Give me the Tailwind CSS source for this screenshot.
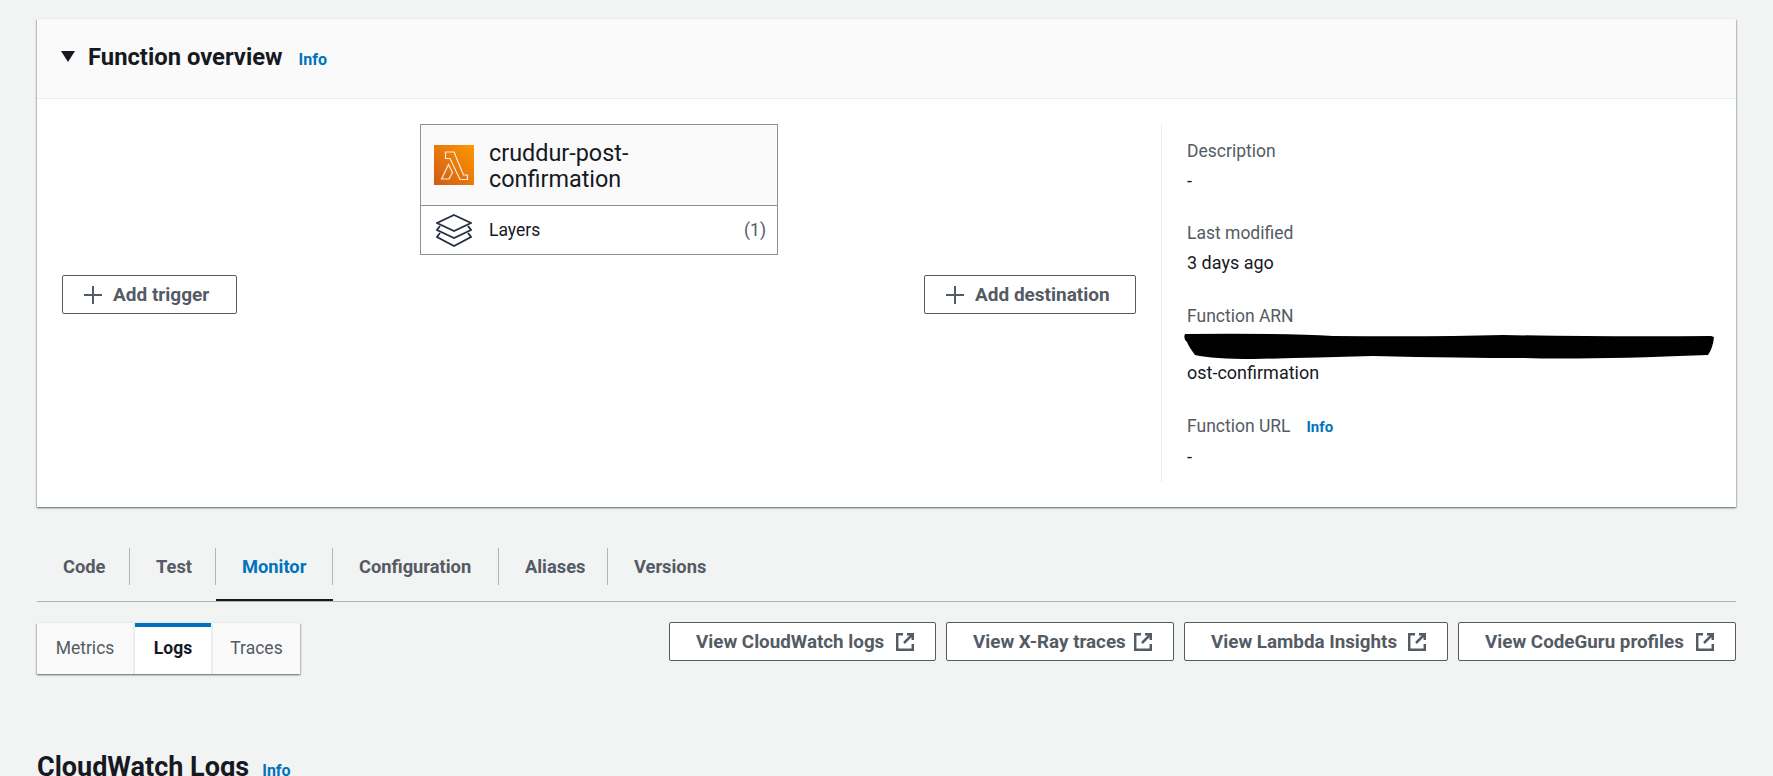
<!DOCTYPE html>
<html lang="en">
<head>
    <meta charset="UTF-8">
    <title>Function overview</title>
    <script src="https://cdn.jsdelivr.net/npm/@tailwindcss/browser@4"></script>
</head>
<body class="bg-[#f2f3f3] text-[#16191f] font-['Roboto',sans-serif] text-[17.5px] h-[776px] overflow-hidden">
<div class="pl-[37px] pr-[37px] pt-[19px]">

    <!-- Function overview card -->
    <section class="bg-white shadow-[0_1px_2px_0_rgba(0,28,36,0.5),1px_1px_1px_0_rgba(0,28,36,0.1),-1px_1px_1px_0_rgba(0,28,36,0.1)]">
        <header class="h-[80px] bg-[#fafafa] border-b border-[#eaeded] flex items-center pl-[24px] pb-[2px]">
            <svg class="w-[14px] h-[11px] mr-[13px] -mt-[2px]" viewBox="0 0 14 11"><path d="M0 0h14L7 11z" fill="#16191f"/></svg>
            <h2 class="text-[23.8px] font-bold">Function overview</h2>
            <a class="ml-[16px] mt-[5px] text-[16px] font-bold text-[#0073bb]">Info</a>
        </header>
        <div class="flex h-[408px]">
            <div class="w-[1124px] flex items-start pt-[25px] pl-[25px]">
                <button class="mt-[151px] w-[175px] h-[39px] bg-white border border-[#545b64] rounded-[2px] flex items-center pl-[21px] pt-[1px] text-[#545b64] text-[19px] font-bold">
                    <svg class="w-[18px] h-[18px] mr-[11px]" viewBox="0 0 18 18"><path d="M9 0v18M0 9h18" stroke="#545b64" stroke-width="2" fill="none"/></svg>
                    Add trigger
                </button>
                <div class="ml-[183px] w-[358px] border border-[#879596]">
                    <div class="h-[81px] bg-[#fafafa] border-b border-[#879596] flex items-center pl-[13px]">
                        <svg class="w-[40px] h-[40px] mr-[15px] shrink-0" viewBox="0 0 40 40">
                            <defs><linearGradient id="lam" x1="0" y1="1" x2="1" y2="0"><stop offset="0" stop-color="#cf5a17"/><stop offset="1" stop-color="#ff9900"/></linearGradient></defs>
                            <rect width="40" height="40" fill="url(#lam)"/>
                            <path d="M11.500 7h8.500l9.500 23h4v4.500h-7.500L16 13.500h-4.500zM14.500 19.500l4 8-3.500 6.500H7.500z" fill="none" stroke="#fff" stroke-opacity="0.85" stroke-width="1.200"/>
                        </svg>
                        <div class="text-[23.400px] leading-[26px] w-[200px] pt-[1px]">cruddur-post-confirmation</div>
                    </div>
                    <div class="h-[48px] flex items-center pl-[15px] pr-[11px]">
                        <svg class="w-[36px] h-[33px] mr-[17px] shrink-0" viewBox="0 0 36 33" fill="none" stroke="#232f3e" stroke-width="1.800">
                            <path d="M18 1 35 9 18 17 1 9z"/>
                            <path d="M4 12 1 16 18 24 35 16 32 12"/>
                            <path d="M4 19 1 23 18 32 35 23 32 19"/>
                        </svg>
                        <span>Layers</span>
                        <span class="ml-auto text-[#545b64]">(1)</span>
                    </div>
                </div>
                <button class="mt-[151px] ml-[146px] w-[212px] h-[39px] bg-white border border-[#545b64] rounded-[2px] flex items-center pl-[21px] pt-[1px] text-[#545b64] text-[19px] font-bold">
                    <svg class="w-[18px] h-[18px] mr-[11px]" viewBox="0 0 18 18"><path d="M9 0v18M0 9h18" stroke="#545b64" stroke-width="2" fill="none"/></svg>
                    Add destination
                </button>
            </div>
            <div class="mt-[25px] h-[358px] border-l border-[#eaeded] pl-[25px] pt-[12px] leading-[30px] flex-1">
                <div class="text-[#545b64]">Description</div>
                <div class="text-[18px]">-</div>
                <div class="mt-[22px] text-[#545b64]">Last modified</div>
                <div class="text-[18px]">3 days ago</div>
                <div class="mt-[23px] text-[#545b64]">Function ARN</div>
                <div class="h-[27px] -ml-[4px]">
                    <svg class="overflow-visible" width="531" height="27" viewBox="0 0 531 27"><path d="M2 3Q100 2 150 5Q250 6 320 4Q430 6 528 5L531 6Q530 17 525 24Q400 29 340 27Q280 27 190 25Q120 27 70 28Q30 28 12 24Q6 16 4 11Q0 8 2 3Z" fill="#000"/></svg>
                </div>
                <div class="text-[18px]">ost-confirmation</div>
                <div class="mt-[22px] text-[#545b64] flex items-center">Function URL <a class="ml-[16px] mt-[2px] text-[15px] font-bold text-[#0073bb]">Info</a></div>
                <div class="text-[18px]">-</div>
            </div>
        </div>
    </section>

    <!-- Tabs -->
    <nav class="mt-[41px] h-[54px] border-b border-[#aab7b8] flex font-bold text-[#545b64] text-[18.300px]">
        <div class="w-[93px] h-[53px]"><div class="h-[37px] border-r border-[#aab7b8] pl-[26px] pt-[1px] flex items-center">Code</div></div>
        <div class="w-[86px] h-[53px]"><div class="h-[37px] border-r border-[#aab7b8] pl-[26px] pt-[1px] flex items-center">Test</div></div>
        <div class="w-[117px] h-[53px] border-b-2 border-[#16191f]"><div class="h-[37px] border-r border-[#aab7b8] pl-[26px] pt-[1px] flex items-center text-[#0073bb]">Monitor</div></div>
        <div class="w-[166px] h-[53px]"><div class="h-[37px] border-r border-[#aab7b8] pl-[26px] pt-[1px] flex items-center">Configuration</div></div>
        <div class="w-[109px] h-[53px]"><div class="h-[37px] border-r border-[#aab7b8] pl-[26px] pt-[1px] flex items-center">Aliases</div></div>
        <div class="h-[53px]"><div class="h-[37px] pl-[26px] pt-[1px] flex items-center">Versions</div></div>
    </nav>

    <!-- Sub tabs and actions -->
    <div class="mt-[21px] flex justify-between items-start">
        <div class="flex h-[51px] shadow-[0_1px_2px_0_rgba(0,28,36,0.5),1px_1px_1px_0_rgba(0,28,36,0.1),-1px_1px_1px_0_rgba(0,28,36,0.1)] text-[#545b64]">
            <div class="w-[98px] bg-[#fafafa] border-r-2 border-[#eaeded] flex items-center justify-center">Metrics</div>
            <div class="w-[76px] bg-white border-t-4 border-[#0073bb] flex items-center justify-center font-bold text-[#16191f] pb-[4px]">Logs</div>
            <div class="w-[89px] bg-[#fafafa] border-l-2 border-[#eaeded] flex items-center justify-center">Traces</div>
        </div>
        <div class="flex gap-[10px] -mt-[1px] font-bold text-[#545b64] text-[18.800px]">
            <button class="w-[267px] h-[39px] bg-white border border-[#545b64] rounded-[2px] flex items-center justify-between pl-[26px] pr-[21px] pt-[1px]">View CloudWatch logs
                <svg class="w-[18px] h-[18px]" viewBox="0 0 18 18" fill="none" stroke="#545b64" stroke-width="2.500"><path d="M7 1.200H1.200v15.600h15.600V11M11 1.200h5.800V7M16.800 1.200 8 10"/></svg>
            </button>
            <button class="w-[228px] h-[39px] bg-white border border-[#545b64] rounded-[2px] flex items-center justify-between pl-[26px] pr-[21px] pt-[1px]">View X-Ray traces
                <svg class="w-[18px] h-[18px]" viewBox="0 0 18 18" fill="none" stroke="#545b64" stroke-width="2.500"><path d="M7 1.200H1.200v15.600h15.600V11M11 1.200h5.800V7M16.800 1.200 8 10"/></svg>
            </button>
            <button class="w-[264px] h-[39px] bg-white border border-[#545b64] rounded-[2px] flex items-center justify-between pl-[26px] pr-[21px] pt-[1px]">View Lambda Insights
                <svg class="w-[18px] h-[18px]" viewBox="0 0 18 18" fill="none" stroke="#545b64" stroke-width="2.500"><path d="M7 1.200H1.200v15.600h15.600V11M11 1.200h5.800V7M16.800 1.200 8 10"/></svg>
            </button>
            <button class="w-[278px] h-[39px] bg-white border border-[#545b64] rounded-[2px] flex items-center justify-between pl-[26px] pr-[21px] pt-[1px]">View CodeGuru profiles
                <svg class="w-[18px] h-[18px]" viewBox="0 0 18 18" fill="none" stroke="#545b64" stroke-width="2.500"><path d="M7 1.200H1.200v15.600h15.600V11M11 1.200h5.800V7M16.800 1.200 8 10"/></svg>
            </button>
        </div>
    </div>

    <!-- CloudWatch Logs -->
    <div class="mt-[78px] flex items-baseline">
        <h2 class="text-[27px] leading-[30px] font-bold">CloudWatch Logs</h2>
        <a class="ml-[13px] text-[16px] font-bold text-[#0073bb]">Info</a>
    </div>
</div>
</body>
</html>
